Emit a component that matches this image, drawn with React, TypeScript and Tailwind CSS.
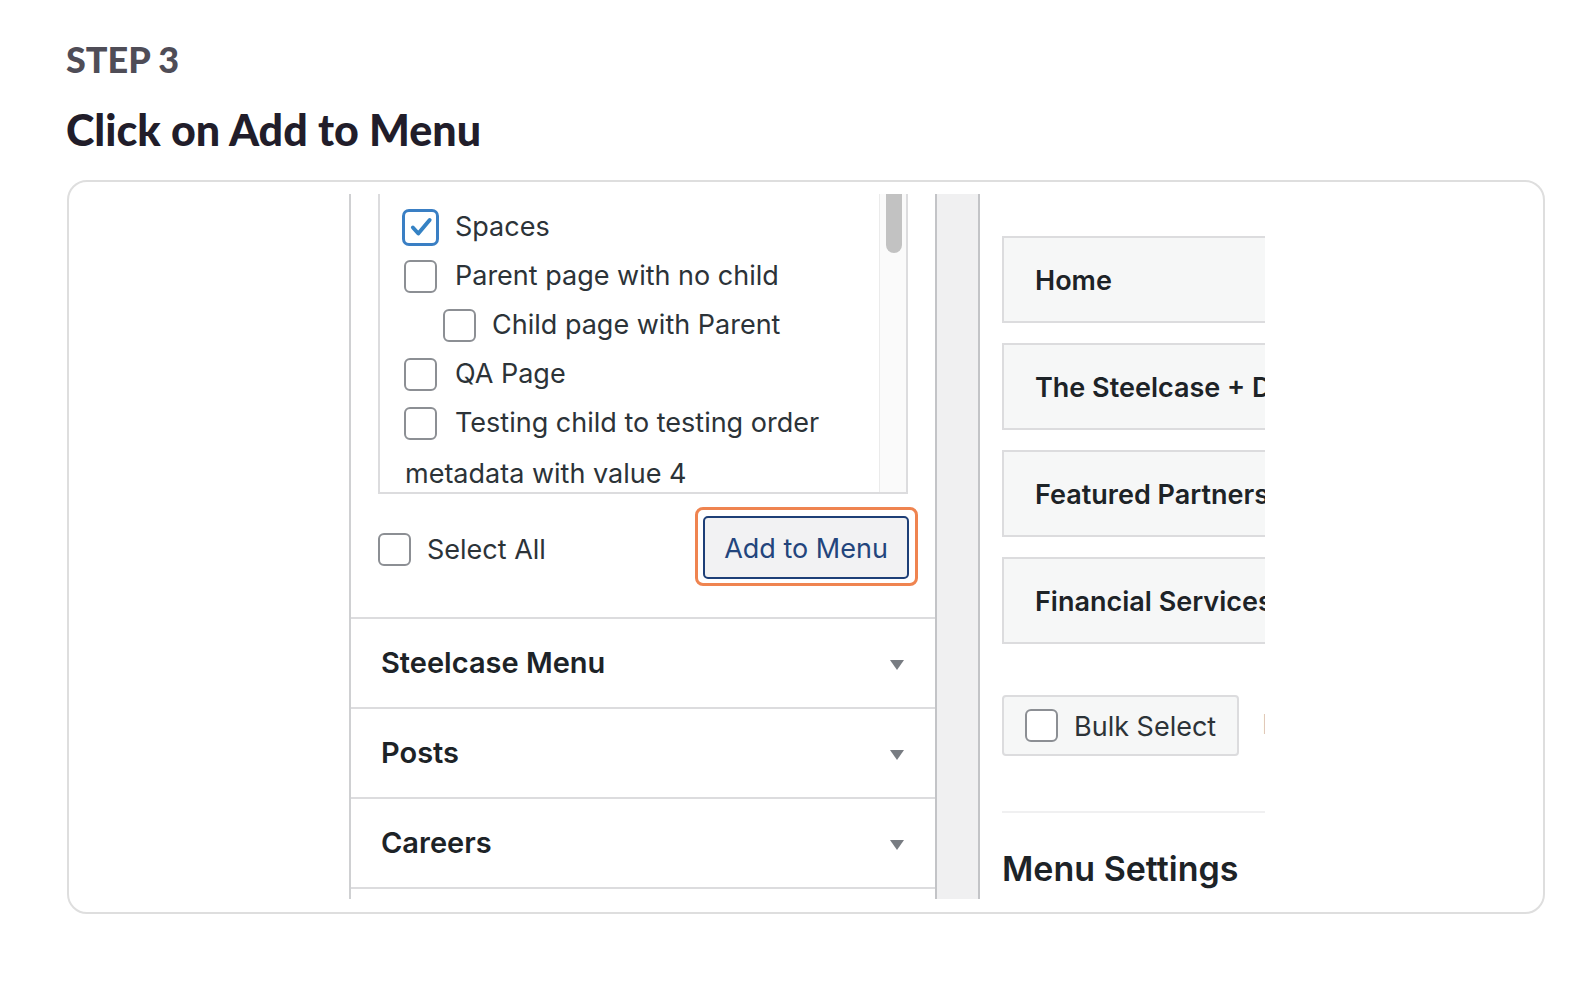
import React from "react";

function Box({ checked }: { checked?: boolean }) {
  if (checked) {
    return (
      <span className="flex h-[37px] w-[37px] shrink-0 items-center justify-center rounded-[7px] border-[3px] border-[#3a7fc4] bg-white">
        <svg viewBox="0 0 24 24" className="h-[26px] w-[26px]">
          <path d="M4.5 12.5l5 5.5L20 5.5" fill="none" stroke="#3582c4" strokeWidth="3.6" strokeLinecap="round" strokeLinejoin="round" />
        </svg>
      </span>
    );
  }
  return <span className="block h-[33px] w-[33px] shrink-0 rounded-[6px] border-2 border-[#8c8f94] bg-white" />;
}

function Tri() {
  return (
    <svg width="16" height="12" viewBox="0 0 16 12" className="mt-[4px]">
      <path d="M1 1h14L8 11z" fill="#787c82" />
    </svg>
  );
}

function Row({ children, pl, checked, gap }: { children: React.ReactNode; pl: string; checked?: boolean; gap: string }) {
  return (
    <div className={`flex h-[49px] items-center ${pl}`}>
      <Box checked={checked} />
      <span className={`${gap} whitespace-nowrap text-[27px] text-[#2c3338]`}>{children}</span>
    </div>
  );
}

function LeftPanel() {
  return (
    <div className="flex w-[586px] shrink-0 flex-col border-l-2 border-[#cfd0d2] bg-white">
      <div className="ml-[27px] flex h-[300px] w-[530px] shrink-0 border-x-2 border-b-2 border-[#dcdcde]">
        <div className="min-w-0 flex-1 overflow-hidden pt-[9px]">
          <Row pl="pl-[22px]" checked gap="ml-[16px]">Spaces</Row>
          <Row pl="pl-[24px]" gap="ml-[18px]">Parent page with no child</Row>
          <Row pl="pl-[63px]" gap="ml-[16px]">Child page with Parent</Row>
          <Row pl="pl-[24px]" gap="ml-[18px]">QA Page</Row>
          <Row pl="pl-[24px]" gap="ml-[18px]">Testing child to testing order</Row>
          <div className="flex h-[49px] items-center pl-[25px] pt-[3px]">
            <span className="whitespace-nowrap text-[27px] text-[#2c3338]">metadata with value 4</span>
          </div>
        </div>
        <div className="w-[27px] shrink-0 border-l border-[#ebebeb] bg-[#fafafa]">
          <div className="ml-[6px] h-[59px] w-[16px] rounded-b-full bg-[#c2c2c2]" />
        </div>
      </div>

      <div className="ml-[27px] mr-[17px] mt-[13px] flex items-center justify-between">
        <label className="mt-[7px] flex items-center">
          <Box />
          <span className="ml-[16px] text-[27px] text-[#2c3338]">Select All</span>
        </label>
        <div className="rounded-[8px] border-[3px] border-[#ef8450] pb-[4px] pl-[5px] pr-[6px] pt-[6px]">
          <button className="flex h-[63px] w-[206px] items-center justify-center rounded-[5px] border-2 border-[#1e3f77] bg-[#f2f2f3] pt-[3px] text-[27px] text-[#23457c]">
            Add to Menu
          </button>
        </div>
      </div>

      <div className="mt-[31px]">
        {["Steelcase Menu", "Posts", "Careers"].map((t) => (
          <div key={t} className="flex h-[90px] items-center justify-between border-t-2 border-[#dcdcde] pl-[30px] pr-[30px]">
            <span className="text-[29px] font-semibold text-[#1d2327]">{t}</span>
            <Tri />
          </div>
        ))}
        <div className="h-[20px] border-t-2 border-[#dcdcde]" />
      </div>
    </div>
  );
}

function RightPanel() {
  const items = ["Home", "The Steelcase + Design Partnership", "Featured Partners", "Financial Services"];
  return (
    <div className="min-w-0 flex-1 overflow-hidden bg-white pl-[22px] pt-[42px]">
      <div className="flex flex-col gap-[20px]">
        {items.map((t) => (
          <div key={t} className="flex h-[87px] w-[420px] shrink-0 items-center whitespace-nowrap border-2 border-[#dcdcde] bg-[#f6f7f7] pl-[31px] pt-[3px] text-[27px] font-semibold text-[#1d2327]">
            {t}
          </div>
        ))}
      </div>
      <div className="mt-[51px] flex items-center">
        <div className="flex h-[61px] w-[237px] shrink-0 items-center rounded-[4px] border-2 border-[#dcdcde] bg-[#f6f7f7] pl-[21px]">
          <Box />
          <span className="ml-[16px] whitespace-nowrap pt-[3px] text-[27px] text-[#2c3338]">Bulk Select</span>
        </div>
        <span className="ml-[23px] whitespace-nowrap text-[27px] text-[#b0b3b6]">Delete</span>
      </div>
      <div className="mt-[55px] h-[2px] w-[420px] bg-[#f0f0f1]" />
      <div className="mt-[39px] whitespace-nowrap text-[34px] font-semibold leading-none text-[#1d2327]">Menu Settings</div>
    </div>
  );
}

export default function App() {
  return (
    <div className="min-h-[994px] bg-white pl-[66px] pt-[38px]">
      <div className="font-['Lato',sans-serif] text-[36px] font-black leading-[1.2] text-[#4f4d57]">STEP 3</div>
      <h1 className="mt-[23px] font-['Lato',sans-serif] text-[43px] font-black leading-[1.2] text-[#211d2a]">Click on Add to Menu</h1>
      <div className="ml-[1px] mt-[24px] h-[734px] w-[1478px] rounded-[20px] border-2 border-[#dedede] pl-[280px] pt-[12px]">
        <div className="flex h-[705px] w-[916px] overflow-hidden font-['Inter',sans-serif]">
          <LeftPanel />
          <div className="w-[45px] shrink-0 border-x-2 border-[#c3c4c7] bg-[#f0f0f1]" />
          <RightPanel />
        </div>
      </div>
    </div>
  );
}
